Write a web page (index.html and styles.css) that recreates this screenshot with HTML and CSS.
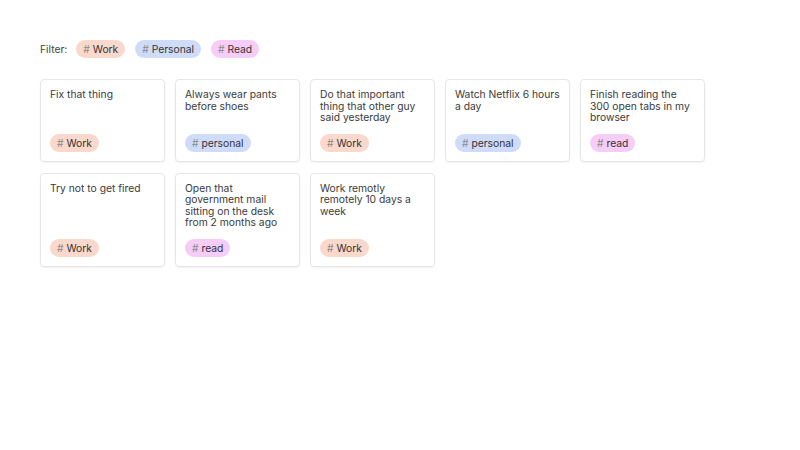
FILE: index.html
```html
<!DOCTYPE html>
<html>
<head>
<meta charset="utf-8">
<link rel="stylesheet" href="styles.css">
</head>
<body>
<div class="page">
  <div class="filter">
    <span class="filter-label">Filter:</span>
    <span class="tag work"><span class="hash">#</span> Work</span>
    <span class="tag personal"><span class="hash">#</span> Personal</span>
    <span class="tag read"><span class="hash">#</span> Read</span>
  </div>
  <div class="grid">
    <div class="card"><div class="title">Fix that thing</div><div><span class="tag work"><span class="hash">#</span> Work</span></div></div>
    <div class="card"><div class="title">Always wear pants before shoes</div><div><span class="tag personal"><span class="hash">#</span> personal</span></div></div>
    <div class="card"><div class="title">Do that important thing that other guy said yesterday</div><div><span class="tag work"><span class="hash">#</span> Work</span></div></div>
    <div class="card"><div class="title">Watch Netflix 6 hours a day</div><div><span class="tag personal"><span class="hash">#</span> personal</span></div></div>
    <div class="card"><div class="title">Finish reading the 300 open tabs in my browser</div><div><span class="tag read"><span class="hash">#</span> read</span></div></div>
    <div class="card"><div class="title">Try not to get fired</div><div><span class="tag work"><span class="hash">#</span> Work</span></div></div>
    <div class="card"><div class="title">Open that government mail sitting on the desk from 2 months ago</div><div><span class="tag read"><span class="hash">#</span> read</span></div></div>
    <div class="card"><div class="title">Work remotly remotely 10 days a week</div><div><span class="tag work"><span class="hash">#</span> Work</span></div></div>
  </div>
</div>
</body>
</html>
```
FILE: styles.css
```css
* { box-sizing: border-box; }
html, body { margin: 0; padding: 0; background: #fff; }
body { font-family: Inter, "Noto Sans", sans-serif; color: #3a3a3a; font-size: 10.3px; }
.page { padding: 40px 40px; }
.filter { display: flex; align-items: center; height: 18px; gap: 10px; }
.filter-label { color: #444; margin-right: -1px; }
.tag {
  display: inline-flex; align-items: center; height: 18px; padding: 0 7px;
  border-radius: 9px; color: #333; white-space: pre;
}
.tag .hash { color: #8a8a8a; }
.work { background: #fad8cb; }
.personal { background: #cfdcf9; }
.read { background: #f6cdf6; }
.grid {
  margin-top: 21px;
  display: grid; grid-template-columns: repeat(5, 125px); gap: 11px 10px;
  align-items: stretch;
}
.card {
  border: 1px solid #e6e6e6; border-radius: 4px;
  box-shadow: 0 1px 2px rgba(0,0,0,0.06);
  padding: 9px;
  display: flex; flex-direction: column; justify-content: space-between; gap: 10px;
}
.title { line-height: 11.5px; color: #3a3a3a; }
```
